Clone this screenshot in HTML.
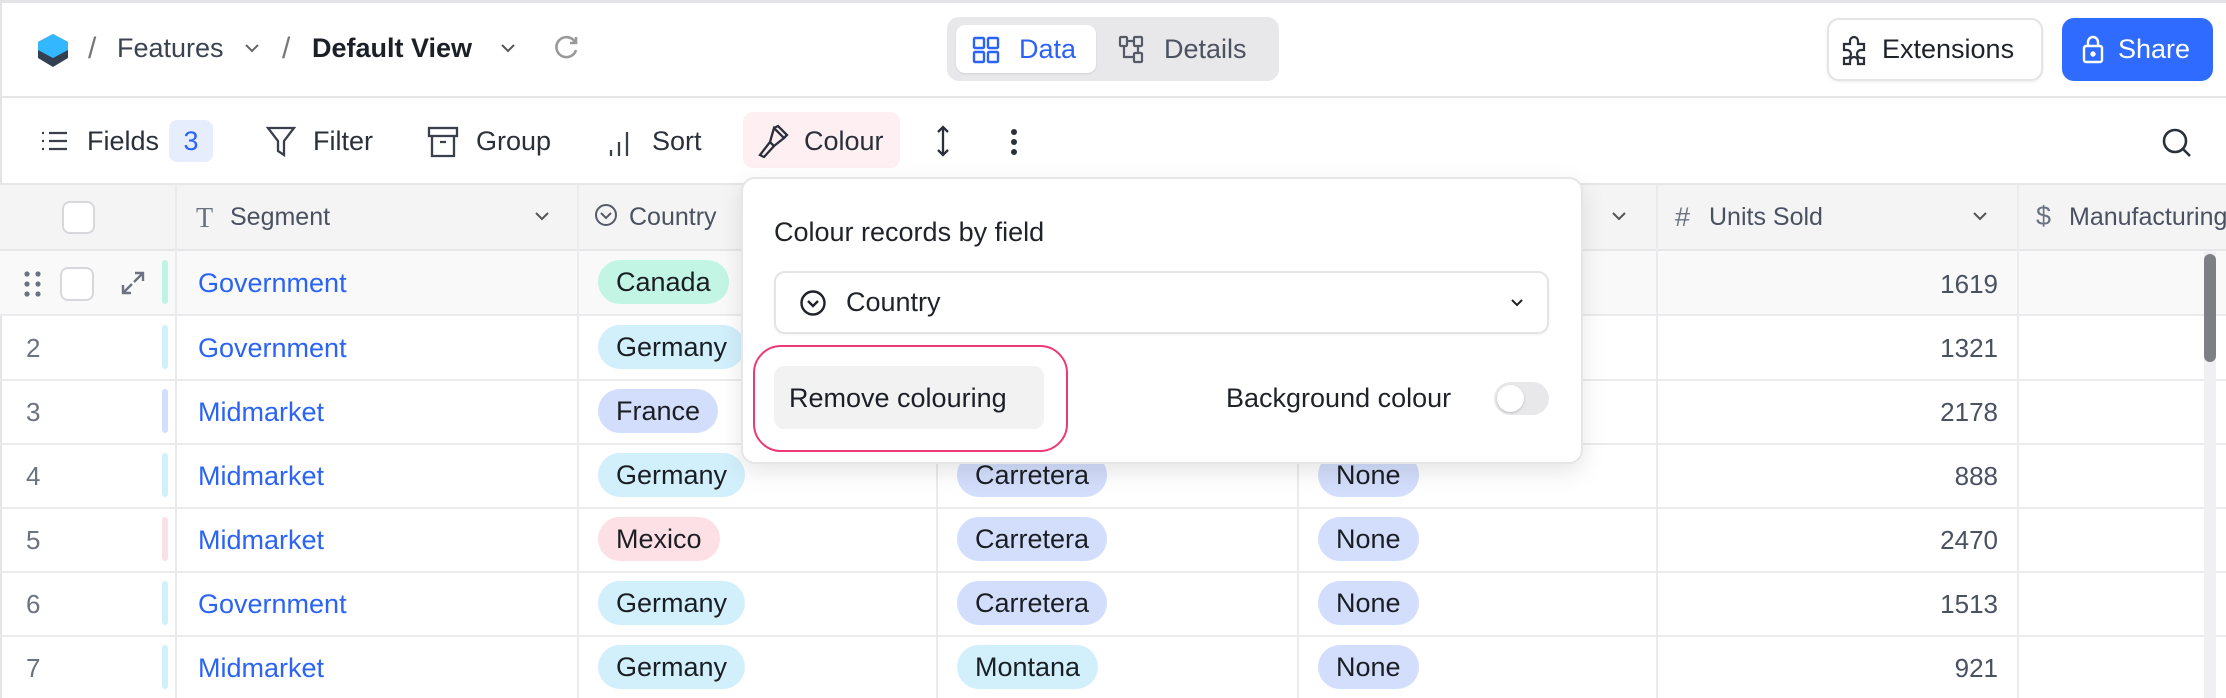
<!DOCTYPE html>
<html><head><meta charset="utf-8"><style>
*{box-sizing:border-box;margin:0;padding:0}
body{width:2226px;height:698px;overflow:hidden;background:#fff;font-family:"Liberation Sans",sans-serif;color:#1f2329;position:relative}
.a{position:absolute}
.t{position:absolute;font-size:27px;line-height:1;white-space:nowrap}
.hl{position:absolute;left:0;width:2226px;height:2px;background:#e6e6e8}
.vl{position:absolute;width:2px;background:#ebebed}
.pill{position:absolute;height:44px;border-radius:22px;padding:0 18px;font-size:27px;line-height:44px;color:#1b1f24}
.lnk{position:absolute;left:198px;font-size:27px;color:#2b63f6;line-height:1}
.num{position:absolute;left:26px;font-size:26px;color:#6b7280;line-height:1}
.bar{position:absolute;left:162px;width:6px;height:44px;border-radius:3px}
.u{position:absolute;right:228px;font-size:26px;color:#4a5160;line-height:1;font-family:"Liberation Sans",sans-serif}
svg{position:absolute}
</style></head><body>
<div class="a" style="left:0;top:0;width:2226px;height:3px;background:#e4e4e6"></div>
<div class="a" style="left:0;top:0;width:2px;height:698px;background:#e4e4e6"></div>
<!-- top bar -->
<svg style="left:37px;top:34px" width="32" height="34" viewBox="0 0 32 34"><path d="M16 0 L31 8 V24 L16 33 L1 24 V8 Z" fill="#334052"/><path d="M16 0 L31 8 V16 L16 24 L1 16 V8 Z" fill="#33b8ff"/></svg>
<div class="t" style="left:88px;top:34px;color:#777;font-size:30px">/</div>
<div class="t" style="left:117px;top:35px;color:#3c4350">Features</div>
<svg style="left:244px;top:42px" width="16" height="12"><path d="M2 3 L8 9 L14 3" stroke="#666" stroke-width="2" fill="none"/></svg>
<div class="t" style="left:282px;top:34px;color:#777;font-size:30px">/</div>
<div class="t" style="left:312px;top:35px;font-weight:bold;color:#1b1f27">Default View</div>
<svg style="left:500px;top:42px" width="16" height="12"><path d="M2 3 L8 9 L14 3" stroke="#555" stroke-width="2" fill="none"/></svg>
<svg style="left:554px;top:34px" width="26" height="26" viewBox="0 0 26 26"><path d="M21 8 A10 10 0 1 0 22 16" stroke="#999" stroke-width="2.6" fill="none"/><path d="M22 3 V9 H16" stroke="#999" stroke-width="2.6" fill="none"/></svg>
<div class="a" style="left:947px;top:17px;width:332px;height:64px;background:#e8e8ea;border-radius:12px"></div>
<div class="a" style="left:956px;top:25px;width:140px;height:48px;background:#fff;border-radius:9px;box-shadow:0 1px 2px rgba(0,0,0,.1)"></div>
<svg style="left:972px;top:36px" width="28" height="28" viewBox="0 0 28 28" fill="none" stroke="#2b63f6" stroke-width="2.4"><rect x="2" y="2" width="10" height="10" rx="1"/><rect x="16" y="2" width="10" height="10" rx="1"/><rect x="2" y="16" width="10" height="10" rx="1"/><rect x="16" y="16" width="10" height="10" rx="1"/></svg>
<div class="t" style="left:1019px;top:36px;color:#2b63f6">Data</div>
<svg style="left:1118px;top:35px" width="28" height="30" viewBox="0 0 28 30" fill="none" stroke="#555b66" stroke-width="2.2"><rect x="2" y="2" width="7" height="9" rx="1"/><rect x="16" y="2" width="8" height="9" rx="1"/><rect x="16" y="18" width="8" height="9" rx="1"/><path d="M9 6 H16 M20 11 V18 M6 11 V22 H16"/></svg>
<div class="t" style="left:1164px;top:36px;color:#4c5260">Details</div>
<div class="a" style="left:1827px;top:18px;width:216px;height:63px;border:2px solid #e4e4e6;border-radius:12px;box-shadow:0 1px 3px rgba(0,0,0,.08)"></div>
<svg style="left:1840px;top:34px" width="30" height="32" viewBox="0 0 30 32" fill="none" stroke="#2a2f38" stroke-width="2.2"><path d="M4 10 H10 V7 A4 4 0 0 1 18 7 V10 H24 V16 H21 A4 4 0 0 0 21 24 H24 V30 H18 V27 A4 4 0 0 0 10 27 V30 H4 V24 H7 A4 4 0 0 0 7 16 H4 Z"/></svg>
<div class="t" style="left:1882px;top:36px;color:#1f2329">Extensions</div>
<div class="a" style="left:2062px;top:18px;width:151px;height:63px;background:#2f6bff;border-radius:12px"></div>
<svg style="left:2082px;top:34px" width="22" height="30" viewBox="0 0 22 30" fill="none" stroke="#fff" stroke-width="2.4"><rect x="2" y="12" width="18" height="16" rx="2"/><path d="M6 12 V8 A5 5 0 0 1 16 8 V12"/><circle cx="11" cy="20" r="1.5" fill="#fff"/></svg>
<div class="t" style="left:2118px;top:36px;color:#fff">Share</div>
<div class="hl" style="top:96px"></div>
<!-- toolbar -->
<svg style="left:40px;top:130px" width="28" height="22" viewBox="0 0 28 22" fill="none" stroke="#3a404b" stroke-width="2.2"><path d="M9 3 H27 M9 11 H27 M9 19 H27 M2 3 H4 M2 11 H4 M2 19 H4"/></svg>
<div class="t" style="left:87px;top:128px;color:#2a303a">Fields</div>
<div class="a" style="left:169px;top:120px;width:44px;height:42px;background:#e6eefe;border-radius:8px;color:#2b63f6;font-size:27px;text-align:center;line-height:42px">3</div>
<svg style="left:266px;top:126px" width="30" height="32" viewBox="0 0 30 32" fill="none" stroke="#3a404b" stroke-width="2.3"><path d="M2 2 H28 L18 15 V29 L12 25 V15 Z"/></svg>
<div class="t" style="left:313px;top:128px;color:#2a303a">Filter</div>
<svg style="left:427px;top:126px" width="32" height="32" viewBox="0 0 32 32" fill="none" stroke="#3a404b" stroke-width="2.3"><rect x="2" y="2" width="28" height="8"/><path d="M5 10 V30 H27 V10 M13 16 H19"/></svg>
<div class="t" style="left:476px;top:128px;color:#2a303a">Group</div>
<svg style="left:608px;top:128px" width="24" height="30" viewBox="0 0 24 30" fill="none" stroke="#3a404b" stroke-width="2.3"><path d="M3 22 V28 M11 14 V28 M19 4 V28"/></svg>
<div class="t" style="left:652px;top:128px;color:#2a303a">Sort</div>
<div class="a" style="left:743px;top:112px;width:157px;height:56px;background:#fdeff2;border-radius:10px"></div>
<svg style="left:756px;top:124px" width="34" height="34" viewBox="0 0 34 34" fill="none" stroke="#2a303a" stroke-width="2.3"><path d="M4 31 L14 18 L18 22 L8 33 Z M14 18 L18 4 L28 14 L18 22 M18 4 L22 2 L31 11 L28 14"/></svg>
<div class="t" style="left:804px;top:128px;color:#2a303a">Colour</div>
<svg style="left:935px;top:124px" width="16" height="34" viewBox="0 0 16 34" fill="none" stroke="#2a303a" stroke-width="2.3"><path d="M8 3 V31 M3 8 L8 3 L13 8 M3 26 L8 31 L13 26"/></svg>
<svg style="left:1010px;top:128px" width="8" height="28"><circle cx="4" cy="4" r="3" fill="#2a303a"/><circle cx="4" cy="14" r="3" fill="#2a303a"/><circle cx="4" cy="24" r="3" fill="#2a303a"/></svg>
<svg style="left:2161px;top:127px" width="32" height="32" viewBox="0 0 32 32" fill="none" stroke="#2a303a" stroke-width="2.6"><circle cx="14" cy="14" r="11"/><path d="M22 22 L29 29"/></svg>
<div class="hl" style="top:183px"></div>
<!-- header -->
<div class="a" style="left:0;top:185px;width:2226px;height:64px;background:#f4f4f5"></div>
<div class="a" style="left:0;top:250px;width:2226px;height:64px;background:#f9f9f9"></div>
<div class="hl" style="top:249px"></div>
<div class="hl" style="top:314px;background:#ebebed"></div>
<div class="hl" style="top:379px;background:#ebebed"></div>
<div class="hl" style="top:443px;background:#ebebed"></div>
<div class="hl" style="top:507px;background:#ebebed"></div>
<div class="hl" style="top:571px;background:#ebebed"></div>
<div class="hl" style="top:635px;background:#ebebed"></div>
<div class="vl" style="left:175px;top:185px;height:513px"></div>
<div class="vl" style="left:577px;top:185px;height:513px"></div>
<div class="vl" style="left:936px;top:185px;height:513px"></div>
<div class="vl" style="left:1297px;top:185px;height:513px"></div>
<div class="vl" style="left:1656px;top:185px;height:513px"></div>
<div class="vl" style="left:2017px;top:185px;height:513px"></div>
<div class="a" style="left:62px;top:201px;width:33px;height:33px;border:2px solid #d8d8dc;border-radius:8px;background:#fff"></div>
<div class="t" style="left:196px;top:205px;color:#6b7280;font-family:'Liberation Serif',serif;font-size:28px">T</div>
<div class="t" style="left:230px;top:205px;color:#4a5160;font-size:25px">Segment</div>
<svg style="left:534px;top:210px" width="16" height="12"><path d="M2 3 L8 9 L14 3" stroke="#555" stroke-width="2" fill="none"/></svg>
<svg style="left:594px;top:203px" width="24" height="24" viewBox="0 0 24 24" fill="none" stroke="#555b66" stroke-width="2"><circle cx="12" cy="12" r="10"/><path d="M7 10 L12 15 L17 10"/></svg>
<div class="t" style="left:629px;top:205px;color:#4a5160;font-size:25px">Country</div>
<svg style="left:1611px;top:210px" width="16" height="12"><path d="M2 3 L8 9 L14 3" stroke="#555" stroke-width="2" fill="none"/></svg>
<div class="t" style="left:1675px;top:204px;color:#6b7280;font-size:27px">#</div>
<div class="t" style="left:1709px;top:205px;color:#4a5160;font-size:25px">Units Sold</div>
<svg style="left:1972px;top:210px" width="16" height="12"><path d="M2 3 L8 9 L14 3" stroke="#555" stroke-width="2" fill="none"/></svg>
<div class="t" style="left:2036px;top:203px;color:#6b7280;font-size:27px">$</div>
<div class="t" style="left:2069px;top:205px;color:#4a5160;font-size:25px">Manufacturing</div>
<!-- row 1 controls -->
<svg style="left:24px;top:271px" width="18" height="26"><g fill="#6b7280"><circle cx="3" cy="3" r="2.6"/><circle cx="14" cy="3" r="2.6"/><circle cx="3" cy="13" r="2.6"/><circle cx="14" cy="13" r="2.6"/><circle cx="3" cy="23" r="2.6"/><circle cx="14" cy="23" r="2.6"/></g></svg>
<div class="a" style="left:60px;top:267px;width:34px;height:34px;border:2px solid #d8d8dc;border-radius:8px;background:#fff"></div>
<svg style="left:120px;top:270px" width="26" height="26" viewBox="0 0 26 26" fill="none" stroke="#6b7280" stroke-width="2.4"><path d="M15 3 H23 V11 M23 3 L14 12 M3 15 V23 H11 M3 23 L12 14"/></svg>
<!-- rows -->
<div class="bar" style="top:260px;background:#bff3e3"></div>
<div class="lnk" style="top:270px">Government</div>
<div class="pill" style="left:598px;top:260px;background:#c3f5e4">Canada</div>
<div class="u" style="top:271px">1619</div>

<div class="num" style="top:335px">2</div><div class="bar" style="top:325px;background:#d2f0fc"></div>
<div class="lnk" style="top:335px">Government</div>
<div class="pill" style="left:598px;top:325px;background:#d2f0fc">Germany</div>
<div class="u" style="top:335px">1321</div>

<div class="num" style="top:399px">3</div><div class="bar" style="top:389px;background:#d3defc"></div>
<div class="lnk" style="top:399px">Midmarket</div>
<div class="pill" style="left:598px;top:389px;background:#d3defc">France</div>
<div class="u" style="top:399px">2178</div>

<div class="num" style="top:463px">4</div><div class="bar" style="top:453px;background:#d2f0fc"></div>
<div class="lnk" style="top:463px">Midmarket</div>
<div class="pill" style="left:598px;top:453px;background:#d2f0fc">Germany</div>
<div class="pill" style="left:957px;top:453px;background:#d3defc">Carretera</div>
<div class="pill" style="left:1318px;top:453px;background:#d3defc">None</div>
<div class="u" style="top:463px">888</div>

<div class="num" style="top:527px">5</div><div class="bar" style="top:517px;background:#fde0e5"></div>
<div class="lnk" style="top:527px">Midmarket</div>
<div class="pill" style="left:598px;top:517px;background:#fde0e5">Mexico</div>
<div class="pill" style="left:957px;top:517px;background:#d3defc">Carretera</div>
<div class="pill" style="left:1318px;top:517px;background:#d3defc">None</div>
<div class="u" style="top:527px">2470</div>

<div class="num" style="top:591px">6</div><div class="bar" style="top:581px;background:#d2f0fc"></div>
<div class="lnk" style="top:591px">Government</div>
<div class="pill" style="left:598px;top:581px;background:#d2f0fc">Germany</div>
<div class="pill" style="left:957px;top:581px;background:#d3defc">Carretera</div>
<div class="pill" style="left:1318px;top:581px;background:#d3defc">None</div>
<div class="u" style="top:591px">1513</div>

<div class="num" style="top:655px">7</div><div class="bar" style="top:645px;background:#d2f0fc"></div>
<div class="lnk" style="top:655px">Midmarket</div>
<div class="pill" style="left:598px;top:645px;background:#d2f0fc">Germany</div>
<div class="pill" style="left:957px;top:645px;background:#d2f0fc">Montana</div>
<div class="pill" style="left:1318px;top:645px;background:#d3defc">None</div>
<div class="u" style="top:655px">921</div>
<!-- scrollbar -->
<div class="a" style="left:2204px;top:252px;width:12px;height:446px;background:#f0f0f2"></div>
<div class="a" style="left:2204px;top:254px;width:12px;height:108px;background:#7d7f84;border-radius:6px"></div>
<!-- popup -->
<div class="a" style="left:741px;top:177px;width:842px;height:287px;background:#fff;border:2px solid #e6e6e8;border-radius:14px;box-shadow:0 8px 24px rgba(0,0,0,.1)"></div>
<div class="t" style="left:774px;top:219px;color:#1f2329">Colour records by field</div>
<div class="a" style="left:774px;top:271px;width:775px;height:63px;border:2px solid #e4e4e6;border-radius:11px;box-shadow:0 1px 2px rgba(0,0,0,.06)"></div>
<svg style="left:799px;top:289px" width="28" height="28" viewBox="0 0 28 28" fill="none" stroke="#1f2329" stroke-width="2.4"><circle cx="14" cy="14" r="11.5"/><path d="M9 12 L14 17 L19 12"/></svg>
<div class="t" style="left:846px;top:289px;color:#1f2329">Country</div>
<svg style="left:1510px;top:298px" width="14" height="10"><path d="M2 2 L7 7 L12 2" stroke="#1f2329" stroke-width="2" fill="none"/></svg>
<div class="a" style="left:753px;top:345px;width:315px;height:107px;border:2px solid #ec3a74;border-radius:28px"></div>
<div class="a" style="left:774px;top:366px;width:270px;height:63px;background:#f2f2f3;border-radius:10px"></div>
<div class="t" style="left:789px;top:385px;color:#1b1f27">Remove colouring</div>
<div class="t" style="left:1226px;top:385px;color:#1f2329">Background colour</div>
<div class="a" style="left:1494px;top:382px;width:55px;height:33px;background:#e8e8ea;border-radius:17px"></div>
<div class="a" style="left:1497px;top:385px;width:27px;height:27px;background:#fff;border-radius:50%;box-shadow:0 1px 2px rgba(0,0,0,.2)"></div>
</body></html>
